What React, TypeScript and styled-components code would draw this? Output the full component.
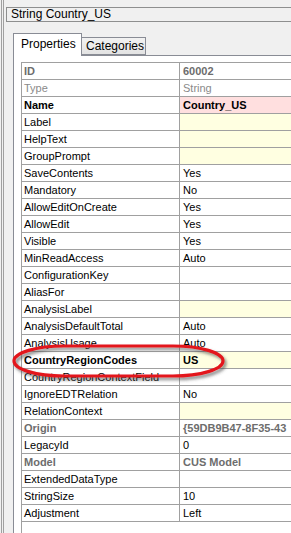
import React from "react";
import styled, { createGlobalStyle } from "styled-components";

const GlobalStyle = createGlobalStyle`
  html, body {
    margin: 0;
    padding: 0;
    background: #f0f0f0;
    overflow: hidden;
  }
`;

type Kind = "plain" | "key" | "muted" | "bold" | "system";
type Fill = "none" | "pink" | "yellow";

interface Prop {
  name: string;
  value?: string;
  kind?: Kind;
  fill?: Fill;
}

const rows: Prop[] = [
  { name: "ID", value: "60002", kind: "key" },
  { name: "Type", value: "String", kind: "muted" },
  { name: "Name", value: "Country_US", kind: "bold", fill: "pink" },
  { name: "Label", fill: "yellow" },
  { name: "HelpText", fill: "yellow" },
  { name: "GroupPrompt", fill: "yellow" },
  { name: "SaveContents", value: "Yes" },
  { name: "Mandatory", value: "No" },
  { name: "AllowEditOnCreate", value: "Yes" },
  { name: "AllowEdit", value: "Yes" },
  { name: "Visible", value: "Yes" },
  { name: "MinReadAccess", value: "Auto" },
  { name: "ConfigurationKey" },
  { name: "AliasFor" },
  { name: "AnalysisLabel", fill: "yellow" },
  { name: "AnalysisDefaultTotal", value: "Auto" },
  { name: "AnalysisUsage", value: "Auto" },
  { name: "CountryRegionCodes", value: "US", kind: "bold", fill: "yellow" },
  { name: "CountryRegionContextField" },
  { name: "IgnoreEDTRelation", value: "No" },
  { name: "RelationContext", fill: "yellow" },
  { name: "Origin", value: "{59DB9B47-8F35-43", kind: "system" },
  { name: "LegacyId", value: "0" },
  { name: "Model", value: "CUS Model", kind: "system" },
  { name: "ExtendedDataType" },
  { name: "StringSize", value: "10" },
  { name: "Adjustment", value: "Left" },
];

const textColor = (kind: Kind) => {
  switch (kind) {
    case "key":
    case "system":
      return "#6d6d6d";
    case "muted":
      return "#8a8a8a";
    default:
      return "#000";
  }
};

const isBold = (kind: Kind) => kind === "bold" || kind === "key" || kind === "system";

const fillColor = (fill: Fill) =>
  fill === "pink" ? "#ffdfdf" : fill === "yellow" ? "#ffffe1" : "#fff";

const Page = styled.div`
  position: relative;
  height: 533px;
  width: 291px;
  overflow: hidden;
  display: flex;
  font-family: "Liberation Sans", Arial, sans-serif;
`;

const OuterEdge = styled.div`
  margin-left: 1px;
  border-left: 1px solid #a0a0a0;
  padding-left: 1px;
  display: flex;
  flex: 1;
`;

const InnerEdge = styled.div`
  border-left: 1px solid #a0a0a0;
  flex: 1;
  display: flex;
  flex-direction: column;
  min-width: 0;
`;

const TitleBox = styled.div`
  margin: 7px -20px 0 2px;
  height: 15px;
  box-sizing: border-box;
  border: 1px solid #8e8f8f;
  background: #f0f0f0;
  font-size: 12px;
  line-height: 13px;
  padding-left: 4px;
  color: #000;
  white-space: nowrap;
`;

const TabStrip = styled.div`
  margin: 11px 0 0 9px;
  display: flex;
  align-items: flex-end;
  position: relative;
  z-index: 1;
`;

const Tab = styled.div<{ $active?: boolean }>`
  box-sizing: border-box;
  width: ${(p) => (p.$active ? "69px" : "64px")};
  height: ${(p) => (p.$active ? "23px" : "18px")};
  margin-bottom: ${(p) => (p.$active ? "-1px" : "0")};
  padding: ${(p) => (p.$active ? "3px 0 0 7px" : "1px 0 0 4px")};
  border: 1px solid #898c95;
  border-bottom: ${(p) => (p.$active ? "none" : "1px solid #898c95")};
  border-left: ${(p) => (p.$active ? "1px solid #898c95" : "none")};
  background: ${(p) =>
    p.$active ? "#fff" : "linear-gradient(#f2f2f2, #e3e3e3)"};
  font-size: 12px;
  line-height: 15px;
  color: #000;
  white-space: nowrap;
`;

const Panel = styled.div`
  flex: 1;
  margin-left: 9px;
  border-top: 1px solid #898c95;
  border-left: 1px solid #898c95;
  background: #fff;
  padding: 6px 0 0 7px;
  display: flex;
  flex-direction: column;
`;

const Grid = styled.div`
  flex: 1;
  border-top: 1px solid #a0a0a0;
  border-left: 1px solid #a0a0a0;
  margin-right: -40px;
`;

const Row = styled.div`
  display: grid;
  grid-template-columns: 158px 1fr;
  height: 17px;
  box-sizing: border-box;
  border-bottom: 1px solid #a0a0a0;
  font-size: 11px;
  line-height: 16px;
`;

const NameCell = styled.div<{ $kind: Kind }>`
  border-right: 1px solid #a0a0a0;
  padding-left: 2px;
  color: ${(p) => textColor(p.$kind)};
  font-weight: ${(p) => (isBold(p.$kind) ? "bold" : "normal")};
  white-space: nowrap;
  overflow: hidden;
`;

const ValueCell = styled.div<{ $kind: Kind; $fill: Fill }>`
  background: ${(p) => fillColor(p.$fill)};
  padding-left: 3px;
  color: ${(p) => textColor(p.$kind)};
  font-weight: ${(p) => (isBold(p.$kind) ? "bold" : "normal")};
  white-space: nowrap;
  overflow: hidden;
`;

const Highlight = styled.svg`
  position: absolute;
  left: 11px;
  top: 343px;
  pointer-events: none;
`;

export default function App() {
  return (
    <>
      <GlobalStyle />
      <Page>
        <OuterEdge>
          <InnerEdge>
            <TitleBox>String Country_US</TitleBox>
            <TabStrip>
              <Tab $active>Properties</Tab>
              <Tab>Categories</Tab>
            </TabStrip>
            <Panel>
              <Grid>
                {rows.map((r) => (
                  <Row key={r.name}>
                    <NameCell $kind={r.kind ?? "plain"}>{r.name}</NameCell>
                    <ValueCell $kind={r.kind ?? "plain"} $fill={r.fill ?? "none"}>
                      {r.value ?? ""}
                    </ValueCell>
                  </Row>
                ))}
              </Grid>
            </Panel>
          </InnerEdge>
        </OuterEdge>
        <Highlight width="222" height="40" viewBox="0 0 222 40">
          <defs>
            <filter id="shade" x="-10%" y="-30%" width="120%" height="170%">
              <feDropShadow dx="2" dy="2.5" stdDeviation="1.8" floodColor="#444" floodOpacity="0.65" />
            </filter>
          </defs>
          <rect
            x="3"
            y="3"
            width="209"
            height="30"
            rx="50"
            ry="15"
            fill="none"
            stroke="#e3141b"
            strokeWidth="3.2"
            filter="url(#shade)"
          />
        </Highlight>
      </Page>
    </>
  );
}
